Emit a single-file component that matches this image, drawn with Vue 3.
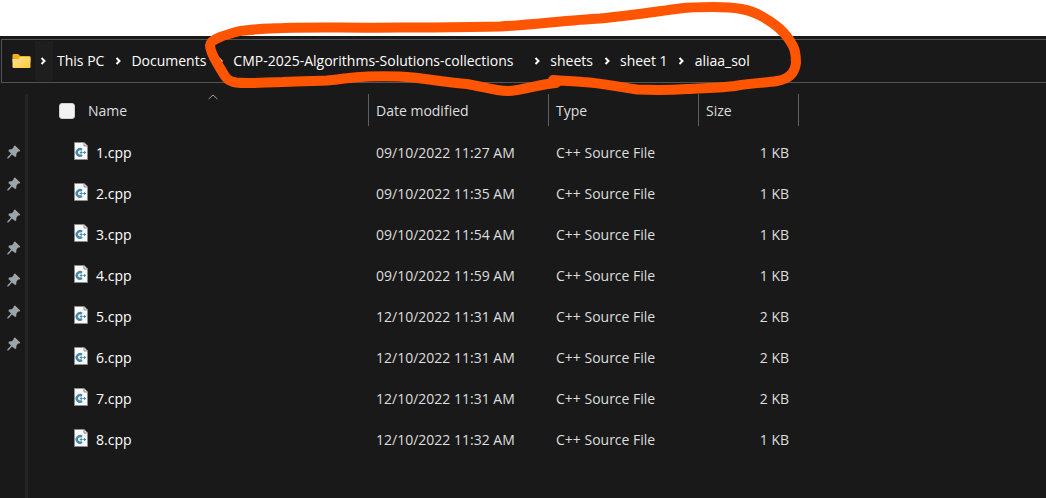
<script setup>
const crumbs = [
  'This PC',
  'Documents',
  'CMP-2025-Algorithms-Solutions-collections',
  'sheets',
  'sheet 1',
  'aliaa_sol'
]

const files = [
  { name: '1.cpp', date: '09/10/2022 11:27 AM', size: '1 KB' },
  { name: '2.cpp', date: '09/10/2022 11:35 AM', size: '1 KB' },
  { name: '3.cpp', date: '09/10/2022 11:54 AM', size: '1 KB' },
  { name: '4.cpp', date: '09/10/2022 11:59 AM', size: '1 KB' },
  { name: '5.cpp', date: '12/10/2022 11:31 AM', size: '2 KB' },
  { name: '6.cpp', date: '12/10/2022 11:31 AM', size: '2 KB' },
  { name: '7.cpp', date: '12/10/2022 11:31 AM', size: '2 KB' },
  { name: '8.cpp', date: '12/10/2022 11:32 AM', size: '1 KB' }
]
</script>

<template>
  <div class="page">
    <main class="explorer">
      <nav class="address" aria-label="Path">
        <svg class="folder" viewBox="0 0 18 14" aria-hidden="true">
          <defs>
            <linearGradient id="folderFill" x1="0" y1="0" x2="1" y2="1">
              <stop offset="0" stop-color="#ffe596" />
              <stop offset="1" stop-color="#ffc937" />
            </linearGradient>
          </defs>
          <path d="M0 1.2Q0 0 1.2 0H5.6L7.8 2H17Q18 2 18 3V8H0Z" fill="#f3ad1a" />
          <path d="M0 5H6L8 3H17Q18 3 18 4V13Q18 14 17 14H1Q0 14 0 13Z" fill="url(#folderFill)" />
        </svg>
        <span class="root">
          <svg class="chevron" viewBox="0 0 6 8" aria-hidden="true"><path d="M1.500 1 4.500 4 1.500 7" /></svg>
        </span>
        <ol class="crumbs">
          <li v-for="(crumb, i) in crumbs" :key="crumb">
            <span v-if="i" class="gap">
              <svg class="chevron" viewBox="0 0 6 8" aria-hidden="true"><path d="M1.500 1 4.500 4 1.500 7" /></svg>
            </span>
            <a href="#" :class="{ repo: i === 2 }">{{ crumb }}</a>
          </li>
        </ol>
      </nav>

      <div class="body">
        <aside class="pins">
          <svg v-for="n in 7" :key="n" class="pin" viewBox="0 0 14 14" aria-hidden="true">
            <path d="M8 0.5 13.2 5.4 12.6 6.4 11.2 6.5 9.4 8.8 9.2 11.4 8 12 5 9.4 1.3 13.4 0.3 13.4 0.3 12.5 4 8.5 1.4 6 2 4.6 4.8 4.2 6.5 2.6 6.8 1Z" />
          </svg>
        </aside>

        <div class="content">
          <table>
            <colgroup>
              <col class="c-name" />
              <col class="c-date" />
              <col class="c-type" />
              <col class="c-size" />
            </colgroup>
            <thead>
              <tr>
                <th scope="col">
                  <div class="head first">
                    <input type="checkbox" aria-label="Select all files" />
                    <span>Name</span>
                    <svg class="sort" viewBox="0 0 10 6" aria-hidden="true"><path d="M0.7 5 5 1 9.3 5" /></svg>
                  </div>
                </th>
                <th scope="col"><div class="head">Date modified</div></th>
                <th scope="col"><div class="head">Type</div></th>
                <th scope="col"><div class="head">Size</div></th>
              </tr>
            </thead>
            <tbody>
              <tr v-for="file in files" :key="file.name">
                <td>
                  <div class="file">
                    <svg class="doc" viewBox="0 0 14 18" aria-hidden="true">
                      <path d="M0.5 0.5H10L13.5 4V17.5H0.5Z" fill="#fbfbfb" stroke="#8d8d8d" />
                      <path d="M10 0.5V4H13.5" fill="#e4e4e4" stroke="#8d8d8d" />
                      <path d="M8 7.7A3.3 3.3 0 1 0 8 13.100" fill="none" stroke="#4389a8" stroke-width="2.4" />
                      <path d="M5.800 10.5H8.600M7.200 9.100V11.900M9.200 10.5H12M10.600 9.100V11.900" stroke="#4389a8" />
                    </svg>
                    <span>{{ file.name }}</span>
                  </div>
                </td>
                <td>{{ file.date }}</td>
                <td>C++ Source File</td>
                <td class="size">{{ file.size }}</td>
              </tr>
            </tbody>
          </table>
        </div>
      </div>
    </main>

    <svg class="marker" width="820" height="100" viewBox="0 0 820 100" aria-hidden="true">
      <path d="M553 80C563 81 573 81 583 82C603 83 617 87 637 89.500C650 90 672 90 687 89C700 88 720 88 735 86C750 83 765 83 777 81C791 79 795 71 796 63C796 57 796 52 793 46C785 31 775 24 763 17C750 9 735 7 713 7C698 7 692 7 680 8.500C660 11 630 16 600 18.500C570 20 530 25 500 26.500C460 27 440 27.500 400 27.500C350 28 310 27 283 28C265 28 250 30 240 31C228 34 210 39 210 45C210 53 216 61 220 68C225 76 226 81 236 82.500C250 84 268 82 283 82C300 81 312 81 327 80.500C345 79 350 77 368 76.500C385 76 398 76 413 77.500C435 80 450 83 467 84C480 86 495 91 508 91C521 91 540 84 556 83" />
    </svg>
  </div>
</template>

<style>
body {
  margin: 0;
  background: #ffffff;
}
</style>

<style scoped>
.page {
  position: relative;
  box-sizing: border-box;
  display: flex;
  flex-direction: column;
  min-height: 100vh;
  padding-top: 36px;
  overflow: hidden;
  color: #dedede;
  font-family: "Segoe UI", "Open Sans", "Noto Sans", sans-serif;
  font-size: 14px;
  line-height: 20px;
}

.explorer {
  flex: 1;
  display: flex;
  flex-direction: column;
  padding-top: 3px;
  background: #191919;
}

.address {
  display: flex;
  align-items: center;
  height: 42px;
  margin-left: 1px;
  padding-left: 10px;
  border: 1px solid #535353;
  border-right: 0;
  color: #ffffff;
}

.folder {
  width: 19px;
  height: 14px;
}

.root {
  display: flex;
  align-items: center;
  align-self: stretch;
  box-sizing: border-box;
  width: 22px;
  margin: 1px 0;
  padding-left: 9px;
  background: linear-gradient(90deg, #191919 4px, #1e1e1e 4px);
}

.chevron {
  width: 6px;
  height: 8px;
  fill: none;
  stroke: #ffffff;
  stroke-width: 2;
}

.crumbs {
  display: flex;
  margin: 0;
  padding: 0 0 0 4px;
  list-style: none;
}

.crumbs li {
  display: flex;
  align-items: center;
  white-space: nowrap;
}

.crumbs a {
  color: inherit;
  text-decoration: none;
}

.crumbs .repo {
  min-width: 290px;
}

.gap {
  display: flex;
  justify-content: center;
  width: 27px;
}

.body {
  flex: 1;
  display: flex;
  padding-top: 11px;
}

.pins {
  display: flex;
  flex-direction: column;
  gap: 18px;
  box-sizing: border-box;
  width: 28px;
  padding: 51px 0 0 7px;
  border-right: 3px solid #242424;
}

.pin {
  width: 14px;
  height: 14px;
  fill: #9aa5ab;
}

.content {
  flex: 1;
  padding-left: 29px;
}

table {
  width: 742px;
  table-layout: fixed;
  border-collapse: collapse;
}

.c-name {
  width: 312px;
}

.c-date {
  width: 180px;
}

.c-type {
  width: 150px;
}

.c-size {
  width: 100px;
}

th {
  padding: 0 0 6px;
  font-weight: 400;
  text-align: left;
}

.head {
  position: relative;
  display: flex;
  align-items: center;
  box-sizing: border-box;
  height: 32px;
  padding: 2px 0 0 7px;
  border-right: 1px solid #606060;
}

.first {
  padding-left: 2px;
  gap: 13px;
}

.sort {
  position: absolute;
  top: 0;
  left: 151px;
  width: 10px;
  height: 6px;
  fill: none;
  stroke: #a0a0a0;
}

input {
  appearance: none;
  box-sizing: border-box;
  width: 16px;
  height: 16px;
  margin: 0;
  border: 1px solid #d0d0d0;
  border-radius: 3px;
  background: #f3f3f3;
}

td {
  height: 41px;
  padding: 0 0 0 7px;
}

.file {
  display: flex;
  align-items: center;
  gap: 8px;
  padding-left: 10px;
  color: #ffffff;
}

.doc {
  width: 14px;
  height: 18px;
  margin-bottom: 4px;
}

.size {
  padding: 0 10px 0 0;
  text-align: right;
}

.marker {
  position: absolute;
  top: 0;
  left: 0;
  fill: none;
  stroke: #ff5500;
  stroke-width: 10;
  stroke-linecap: round;
  stroke-linejoin: round;
  pointer-events: none;
}
</style>
